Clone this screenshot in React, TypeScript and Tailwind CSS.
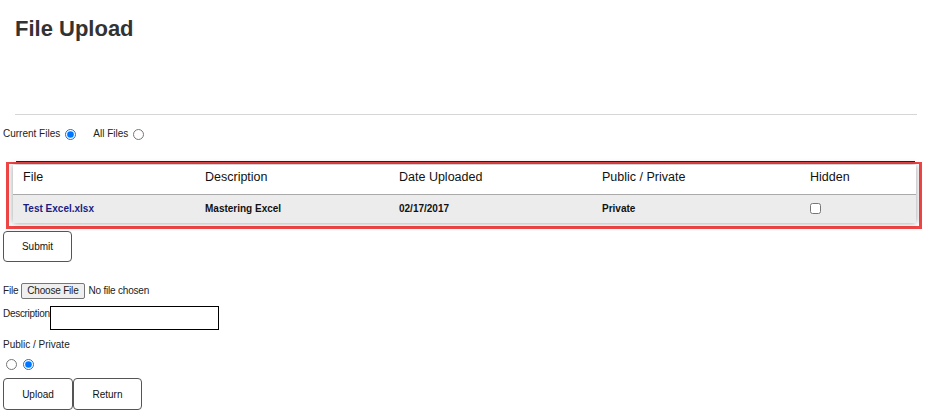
import React from 'react';

const cols = 'grid grid-cols-[182px_194px_203px_208px_116px]';

export default function App() {
  return (
    <div className="w-[928px] h-[420px] bg-white text-[#222] font-['Liberation_Sans',Arial,sans-serif] relative overflow-hidden">
      {/* Title */}
      <h1 className="pl-[15px] pt-[15px] text-[22px] leading-[28px] font-bold text-[#333]">File Upload</h1>

      <hr className="mt-[71px] ml-[15px] w-[902px] border-t border-[#d6d6d6]" />

      {/* Filter radios */}
      <div className="mt-[12px] pl-[3px] flex items-center text-[10px] leading-[14px] text-[#222]">
        <span>Current Files</span>
        <input type="radio" name="scope" defaultChecked className="ml-[5px] w-[11px] h-[11px] accent-[#0075ff]" />
        <span className="ml-[17px]">All Files</span>
        <input type="radio" name="scope" className="ml-[5px] w-[11px] h-[11px]" />
      </div>

      {/* Files table (annotated) */}
      <div className="mt-[20px] ml-[16px] w-[899px] h-px bg-[#1c1c6e]" />
      <div className="ml-[6px] w-[916px] border-[3px] border-t-[2px] border-[#f04545] px-[4px] pt-[1px] pb-[3px]">
        <div className="w-[903px] shadow-[0_0_6px_rgba(0,0,0,0.4)]">
          <div className={`${cols} h-[30px] items-center pb-[4px] bg-white text-[12.5px] text-[#111] border-b border-[#aaa]`}>
            <div className="pl-[10px]">File</div>
            <div className="pl-[10px]">Description</div>
            <div className="pl-[10px]">Date Uploaded</div>
            <div className="pl-[10px]">Public / Private</div>
            <div className="pl-[10px]">Hidden</div>
          </div>
          <div className={`${cols} h-[28px] items-center pb-[1px] bg-[#ececec] text-[10px] font-bold text-[#111]`}>
            <div className="pl-[10px] text-[#1c1c80]">Test Excel.xlsx</div>
            <div className="pl-[10px]">Mastering Excel</div>
            <div className="pl-[10px]">02/17/2017</div>
            <div className="pl-[10px]">Private</div>
            <div className="pl-[10px] flex items-center">
              <input type="checkbox" className="w-[11px] h-[11px]" />
            </div>
          </div>
        </div>
      </div>

      <button className="mt-[2px] ml-[3px] w-[69px] h-[31px] rounded-[4px] border border-[#555] bg-white text-[10px] text-[#111]">
        Submit
      </button>

      {/* Upload form */}
      <div className="mt-[21px] pl-[3px] flex items-center text-[10px] leading-[14px]">
        <span className="tracking-[-0.2px]">File</span>
        <span className="ml-[3px] px-[5px] h-[16px] flex items-center border border-[#767676] bg-[#efefef] rounded-[2px] text-[10px] tracking-[-0.2px]">
          Choose File
        </span>
        <span className="ml-[4px] tracking-[-0.2px]">No file chosen</span>
      </div>

      <div className="mt-[7px] pl-[3px] flex items-start text-[10px] leading-[14px]">
        <span className="mt-[1px] w-[47px] tracking-[-0.3px] whitespace-nowrap">Description</span>
        <div className="w-[169px] h-[24px] border border-black bg-white" />
      </div>

      <div className="mt-[8px] pl-[3px] text-[10px] leading-[14px]">Public / Private</div>

      <div className="mt-[7px] pl-[6px] flex items-center gap-[6px]">
        <input type="radio" name="vis" className="w-[11px] h-[11px]" />
        <input type="radio" name="vis" defaultChecked className="w-[11px] h-[11px] accent-[#0075ff]" />
      </div>

      <div className="mt-[8px] pl-[3px] flex">
        <button className="w-[70px] h-[32px] rounded-[4px] border border-[#555] bg-white text-[10px] text-[#111]">Upload</button>
        <button className="w-[69px] h-[32px] rounded-[4px] border border-[#555] bg-white text-[10px] text-[#111]">Return</button>
      </div>
    </div>
  );
}
